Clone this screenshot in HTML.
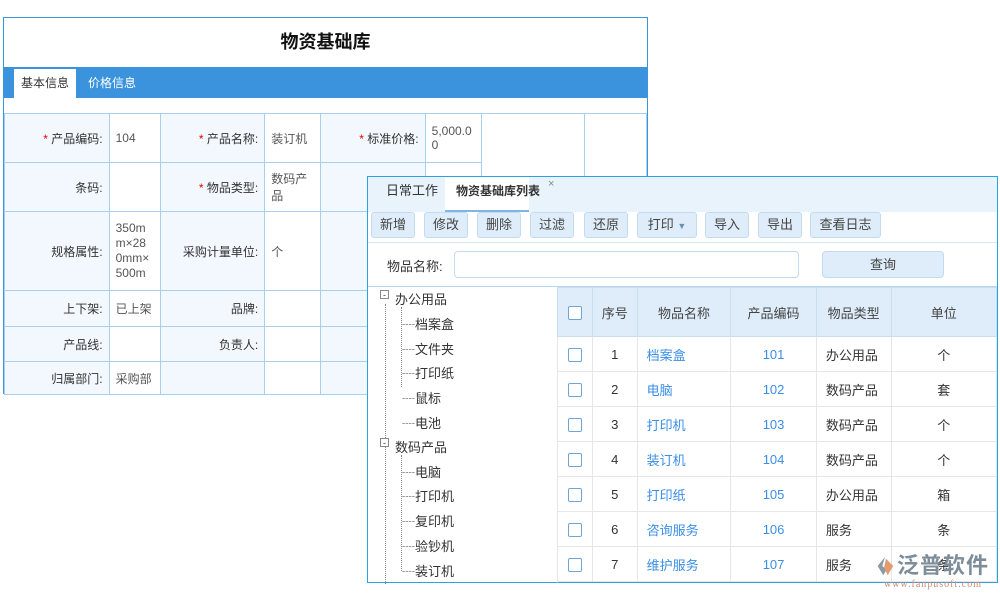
<!DOCTYPE html>
<html><head><meta charset="utf-8"><style>
*{margin:0;padding:0;box-sizing:border-box}
body{width:1000px;height:600px;background:#fff;position:relative;overflow:hidden;font-family:"Liberation Sans","Noto Sans CJK SC",sans-serif;font-size:12px;color:#333}
.abs{position:absolute}
#back{left:3px;top:17px;width:645px;height:377px;border:1px solid #3a96dd;background:#fff}
#back table{position:absolute;left:0;top:95px;border-collapse:collapse}
#back td{border:1px solid #a9cfee;font-size:12px;color:#333;vertical-align:middle;padding:0 6px}
#back td.l{background:#f2f8fd;text-align:right}
#back td.v{background:#fff;color:#555}
.r{color:#e00}
#front{left:367px;top:176px;width:631px;height:407px;border:1px solid #2aa3e0;background:#fff}
.btn{position:absolute;top:35px;height:26px;background:#deedf9;border:1px solid #c3dbf0;border-radius:3px;text-align:center;line-height:24px;font-size:13px;color:#444}
.tree{position:absolute;font-size:13px;color:#333}
.grid{position:absolute;left:189px;top:110px;border-collapse:collapse}
.grid td{border:1px solid #e6e6e6;height:35px;text-align:center;font-size:13px;color:#333;background:#fff}
.grid tr.h td{height:49px;background:#deedf9;border-color:#c9dff0;color:#444}
.grid td.n{color:#3a8ee6;text-align:left;padding-left:9px}
.grid td.c{color:#3a8ee6}
.grid td.t{text-align:left;padding-left:9px}
.cb{display:inline-block;width:14px;height:14px;border:1px solid #6fa5d6;border-radius:2px;background:#fff;vertical-align:middle}
</style></head><body>
<div id="back" class="abs">
 <div class="abs" style="left:0;width:643px;top:10px;text-align:center;font-size:18px;font-weight:bold;color:#111">物资基础库</div>
 <div class="abs" style="left:0;top:49px;width:643px;height:31px;background:#3a93dc"></div>
 <div class="abs" style="left:10px;top:51px;width:62px;height:30px;background:#fff;text-align:center;line-height:28px;color:#333">基本信息</div>
 <div class="abs" style="left:84px;top:51px;line-height:28px;color:#fff">价格信息</div>
 <table>
  <tr style="height:49px"><td class="l" style="width:105px"><span class="r">*</span> 产品编码:</td><td class="v" style="width:51px">104</td><td class="l" style="width:105px"><span class="r">*</span> 产品名称:</td><td class="v" style="width:56px">装订机</td><td class="l" style="width:105px"><span class="r">*</span> 标准价格:</td><td class="v" style="width:56px">5,000.0<br>0</td><td style="width:104px" rowspan="6"></td><td style="width:62px" rowspan="6"></td></tr>
  <tr style="height:49px"><td class="l">条码:</td><td class="v"></td><td class="l"><span class="r">*</span> 物品类型:</td><td class="v">数码产<br>品</td><td class="l"></td><td class="v"></td></tr>
  <tr style="height:79px"><td class="l">规格属性:</td><td class="v" style="line-height:15px">350m<br>m×28<br>0mm×<br>500m</td><td class="l">采购计量单位:</td><td class="v">个</td><td class="l"></td><td class="v"></td></tr>
  <tr style="height:36px"><td class="l">上下架:</td><td class="v">已上架</td><td class="l">品牌:</td><td class="v"></td><td class="l">库存</td><td class="v"></td></tr>
  <tr style="height:35px"><td class="l">产品线:</td><td class="v"></td><td class="l">负责人:</td><td class="v"></td><td class="l"></td><td class="v"></td></tr>
  <tr style="height:33px"><td class="l">归属部门:</td><td class="v">采购部</td><td class="l"></td><td class="v"></td><td class="l"></td><td class="v"></td></tr>
 </table>
</div>
<div id="front" class="abs">
 <div class="abs" style="left:0;top:0;width:629px;height:35px;background:#e8f3fc"></div>
 <div class="abs" style="left:18px;top:3px;font-size:13px;line-height:22px;color:#333">日常工作</div>
 <div class="abs" style="left:77px;top:0;width:84px;height:35px;background:#fff;border-bottom:2px solid #7fb4e3"></div>
 <div class="abs" style="left:88px;top:3px;font-size:12px;line-height:22px;font-weight:bold;color:#333">物资基础库列表</div>
 <div class="abs" style="left:180px;top:1px;font-size:11px;color:#888">×</div>
 <div class="abs" style="left:0;top:35px;width:629px;height:31px;background:#fff;border-bottom:1px solid #d6e6f3"></div>
 <div class="btn" style="left:3px;width:44px">新增</div>
 <div class="btn" style="left:56px;width:44px">修改</div>
 <div class="btn" style="left:109px;width:44px">删除</div>
 <div class="btn" style="left:162px;width:44px">过滤</div>
 <div class="btn" style="left:216px;width:44px">还原</div>
 <div class="btn" style="left:269px;width:60px">打印 <span style="font-size:9px;color:#6a8fb6">▼</span></div>
 <div class="btn" style="left:337px;width:44px">导入</div>
 <div class="btn" style="left:390px;width:44px">导出</div>
 <div class="btn" style="left:442px;width:71px">查看日志</div>
 <div class="abs" style="left:19px;top:79px;font-size:13px;color:#333">物品名称:</div>
 <div class="abs" style="left:86px;top:74px;width:345px;height:27px;border:1px solid #c3d9ec;border-radius:4px;background:#fff"></div>
 <div class="abs" style="left:454px;top:74px;width:122px;height:27px;border:1px solid #c3dbf0;border-radius:4px;background:#deedf9;text-align:center;line-height:25px;font-size:13px;color:#444">查询</div>
 <div class="abs" style="left:0;top:109px;width:629px;border-top:1px solid #b7d6ef"></div>
 <div class="abs" style="left:189px;top:110px;height:296px;border-left:1px solid #8fc0e8"></div>
 <div class="abs" style="left:17px;top:127px;height:280px;border-left:1px dotted #888"></div>
 <div class="abs" style="left:33px;top:130px;height:80px;border-left:1px dotted #888"></div>
 <div class="abs" style="left:33px;top:278px;height:116px;border-left:1px dotted #888"></div>
 <div class="tree" style="left:12px;top:113px;font-size:9px;line-height:9px;border:1px solid #888;width:9px;height:9px;text-align:center;background:#fff">-</div>
 <div class="tree" style="left:27px;top:112px">办公用品</div>
 <div class="tree" style="left:34px;top:137px">┈档案盒</div>
 <div class="tree" style="left:34px;top:162px">┈文件夹</div>
 <div class="tree" style="left:34px;top:186px">┈打印纸</div>
 <div class="tree" style="left:34px;top:211px">┈鼠标</div>
 <div class="tree" style="left:34px;top:236px">┈电池</div>
 <div class="tree" style="left:12px;top:261px;font-size:9px;line-height:9px;border:1px solid #888;width:9px;height:9px;text-align:center;background:#fff">-</div>
 <div class="tree" style="left:27px;top:260px">数码产品</div>
 <div class="tree" style="left:34px;top:285px">┈电脑</div>
 <div class="tree" style="left:34px;top:309px">┈打印机</div>
 <div class="tree" style="left:34px;top:334px">┈复印机</div>
 <div class="tree" style="left:34px;top:359px">┈验钞机</div>
 <div class="tree" style="left:34px;top:384px">┈装订机</div>
 <table class="grid">
  <tr class="h"><td style="width:35px"><span class="cb"></span></td><td style="width:45px">序号</td><td style="width:94px">物品名称</td><td style="width:86px">产品编码</td><td style="width:75px">物品类型</td><td style="width:106px">单位</td></tr>
  <tr><td><span class="cb"></span></td><td>1</td><td class="n">档案盒</td><td class="c">101</td><td class="t">办公用品</td><td>个</td></tr>
  <tr><td><span class="cb"></span></td><td>2</td><td class="n">电脑</td><td class="c">102</td><td class="t">数码产品</td><td>套</td></tr>
  <tr><td><span class="cb"></span></td><td>3</td><td class="n">打印机</td><td class="c">103</td><td class="t">数码产品</td><td>个</td></tr>
  <tr><td><span class="cb"></span></td><td>4</td><td class="n">装订机</td><td class="c">104</td><td class="t">数码产品</td><td>个</td></tr>
  <tr><td><span class="cb"></span></td><td>5</td><td class="n">打印纸</td><td class="c">105</td><td class="t">办公用品</td><td>箱</td></tr>
  <tr><td><span class="cb"></span></td><td>6</td><td class="n">咨询服务</td><td class="c">106</td><td class="t">服务</td><td>条</td></tr>
  <tr><td><span class="cb"></span></td><td>7</td><td class="n">维护服务</td><td class="c">107</td><td class="t">服务</td><td>条</td></tr>
 </table>
</div>
<svg class="abs" style="left:874px;top:555px" width="22" height="22" viewBox="0 0 24 24"><path d="M12 2 L4 12 L10 22 L14 16 L9 12 Z" fill="#8a99a6"/><path d="M13 4 L21 12 L15 22 L11 14 Z" fill="#e49a6f"/></svg>
<div class="abs" style="left:897px;top:553px;font-size:22px;font-weight:bold;color:#7d8d99;letter-spacing:1px;line-height:26px">泛普软件</div>
<div class="abs" style="left:884px;top:579px;font-size:10px;color:#d08a70;font-family:'Liberation Serif',serif;letter-spacing:1px">www.fanpusoft.com</div>
</body></html>
